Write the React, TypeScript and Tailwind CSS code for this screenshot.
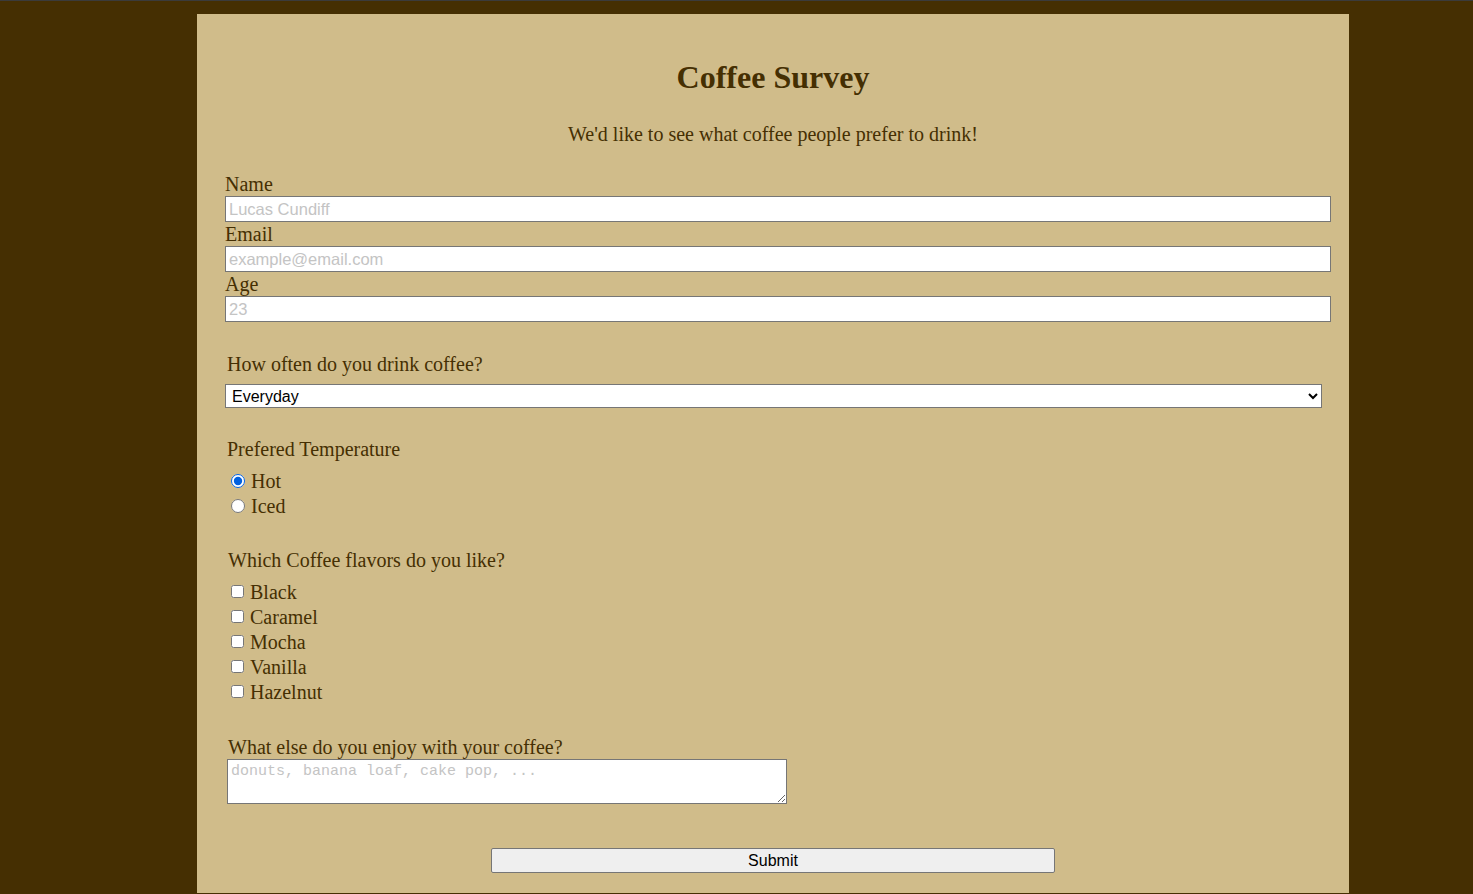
export default function App() {
  const flavors = ["Black", "Caramel", "Mocha", "Vanilla", "Hazelnut"];
  const field =
    "mt-px block h-[26px] w-full border border-[#767676] bg-white px-[3px] font-['Liberation_Sans',sans-serif] text-[16.5px] text-black placeholder:text-[#c4c4c4]";

  return (
    <div className="min-h-screen bg-[#452f02] border-t border-[#3b3b3b] pt-[13px] pb-[2px] font-['Liberation_Serif',serif] text-[#452f02]">
      <div className="ml-[197px] w-[1152px] bg-[#d0bc8a] pt-[45px] pb-[20px] pl-[28px] pr-[18px]">
        <h1 className="text-center text-[32px] leading-[37px] font-bold ml-[-10px]">Coffee Survey</h1>
        <p className="mt-[27px] text-center text-[20px] leading-[23px] ml-[-10px]">
          We'd like to see what coffee people prefer to drink!
        </p>

        <form className="mt-[26px]" onSubmit={(e) => e.preventDefault()}>
          <label className="block text-[20px] leading-[23px] pt-[1px] h-[23px]">Name</label>
          <input type="text" placeholder="Lucas Cundiff" className={field} />
          <label className="block text-[20px] leading-[23px] pt-[1px] h-[23px]">Email</label>
          <input type="email" placeholder="example@email.com" className={field} />
          <label className="block text-[20px] leading-[23px] pt-[1px] h-[23px]">Age</label>
          <input type="number" placeholder="23" className={field} />

          <p className="mt-[31px] ml-[2px] text-[20px] leading-[23px]">How often do you drink coffee?</p>
          <select
            defaultValue="everyday"
            className="mt-[8px] block h-[24px] w-[1097px] border border-[#767676] bg-white pl-[2px] font-['Liberation_Sans',sans-serif] text-[16px] text-black"
          >
            <option value="everyday">Everyday</option>
            <option value="weekly">A few times a week</option>
            <option value="rarely">Rarely</option>
          </select>

          <p className="mt-[30px] ml-[2px] text-[20px] leading-[23px]">Prefered Temperature</p>
          <div className="mt-[8px] ml-px">
            <label className="flex h-[25px] items-center text-[20px] leading-[25px]">
              <input type="radio" name="temp" defaultChecked className="ml-[5px] mr-[6px] mb-[2px] h-[14px] w-[14px] accent-[#0060df]" /> Hot
            </label>
            <label className="flex h-[25px] items-center text-[20px] leading-[25px]">
              <input type="radio" name="temp" className="ml-[5px] mr-[6px] mb-[2px] h-[14px] w-[14px] accent-[#0060df]" /> Iced
            </label>
          </div>

          <p className="mt-[30px] ml-[3px] text-[20px] leading-[23px]">Which Coffee flavors do you like?</p>
          <div className="mt-[8px] ml-px">
            {flavors.map((f) => (
              <label key={f} className="flex h-[25px] items-center text-[20px] leading-[25px]">
                <input type="checkbox" className="ml-[5px] mr-[6px] mb-[2px] h-[13px] w-[13px]" /> {f}
              </label>
            ))}
          </div>

          <p className="mt-[31px] ml-[3px] text-[20px] leading-[23px]">What else do you enjoy with your coffee?</p>
          <textarea
            placeholder="donuts, banana loaf, cake pop, ..."
            className="ml-[2px] block h-[45px] w-[560px] border border-[#767676] bg-white px-[3px] py-[3px] font-['Liberation_Mono',monospace] text-[15px] leading-[18px] text-black placeholder:text-[#c4c4c4]"
          />

          <div className="mt-[44px] flex justify-center ml-[-10px]">
            <button
              type="submit"
              className="h-[25px] w-[564px] rounded-[2px] border border-[#767676] bg-[#efefef] font-['Liberation_Sans',sans-serif] text-[16px] text-black"
            >
              Submit
            </button>
          </div>
        </form>
      </div>
    </div>
  );
}
